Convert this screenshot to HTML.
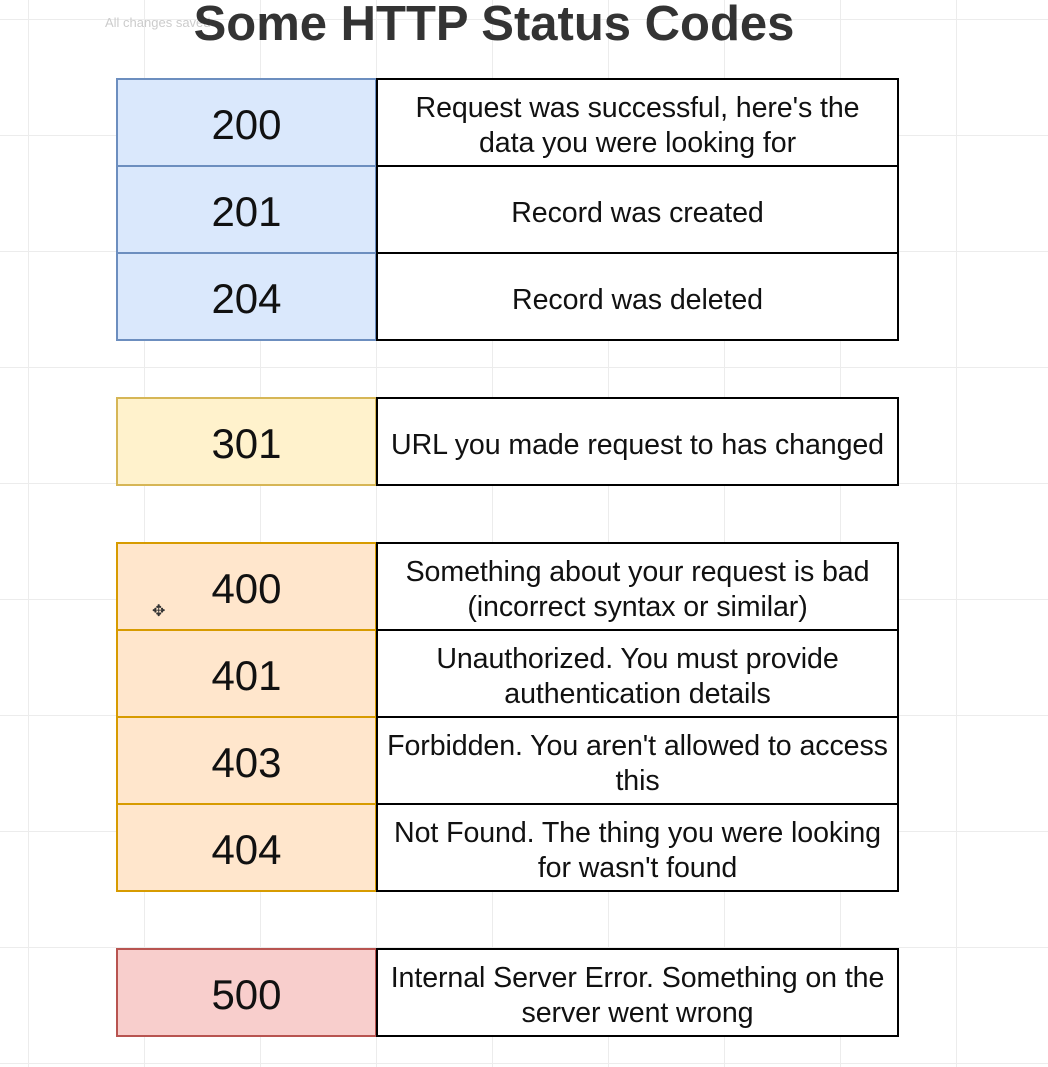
<!DOCTYPE html>
<html><head><meta charset="utf-8"><style>
html,body{margin:0;padding:0}
body{width:1048px;height:1067px;position:relative;overflow:hidden;font-family:"Liberation Sans",sans-serif;
background-color:#fff;
background-image:linear-gradient(to right,#ececec 1px,transparent 1px),linear-gradient(to bottom,#ececec 1px,transparent 1px);
background-size:116px 116px;background-position:28px 19px;}
.t{position:absolute;left:0;width:988px;top:-4px;text-align:center;font-weight:bold;font-size:49px;color:#333;}
.tb{position:absolute;left:105px;top:15px;font-size:13px;color:#ccc}
.c{position:absolute;box-sizing:border-box;display:flex;align-items:center;justify-content:center;text-align:center;color:#111}
.n{left:116px;width:261px;font-size:42px;border:2px solid;padding-top:4px}
.d{left:376px;width:523px;font-size:28.6px;line-height:35px;border:2px solid #000;background:#fff;padding:7px 0 0 0;letter-spacing:-0.1px}
.b{background:#dae8fc;border-color:#6c8ebf}
.y{background:#fff2cc;border-color:#d6b656}
.o{background:#ffe6cc;border-color:#d79b00}
.r{background:#f8cecc;border-color:#b85450}
</style></head><body>
<div class="tb">All changes saved</div>
<div class="t">Some HTTP Status Codes</div>

<div class="c n b" style="top:78px;height:89px">200</div>
<div class="c d" style="top:78px;height:89px">Request was successful, here's the<br>data you were looking for</div>
<div class="c n b" style="top:165px;height:89px">201</div>
<div class="c d" style="top:165px;height:89px">Record was created</div>
<div class="c n b" style="top:252px;height:89px">204</div>
<div class="c d" style="top:252px;height:89px">Record was deleted</div>

<div class="c n y" style="top:397px;height:89px">301</div>
<div class="c d" style="top:397px;height:89px">URL you made request to has changed</div>

<div class="c n o" style="top:542px;height:89px">400</div>
<div class="c d" style="top:542px;height:89px">Something about your request is bad<br>(incorrect syntax or similar)</div>
<div class="c n o" style="top:629px;height:89px">401</div>
<div class="c d" style="top:629px;height:89px">Unauthorized. You must provide<br>authentication details</div>
<div class="c n o" style="top:716px;height:89px">403</div>
<div class="c d" style="top:716px;height:89px">Forbidden. You aren't allowed to access<br>this</div>
<div class="c n o" style="top:803px;height:89px">404</div>
<div class="c d" style="top:803px;height:89px">Not Found. The thing you were looking<br>for wasn't found</div>

<div class="c n r" style="top:948px;height:89px">500</div>
<div class="c d" style="top:948px;height:89px">Internal Server Error. Something on the<br>server went wrong</div>
<div style="position:absolute;left:152px;top:601px;font-size:16px;color:#333">✥</div>
</body></html>
